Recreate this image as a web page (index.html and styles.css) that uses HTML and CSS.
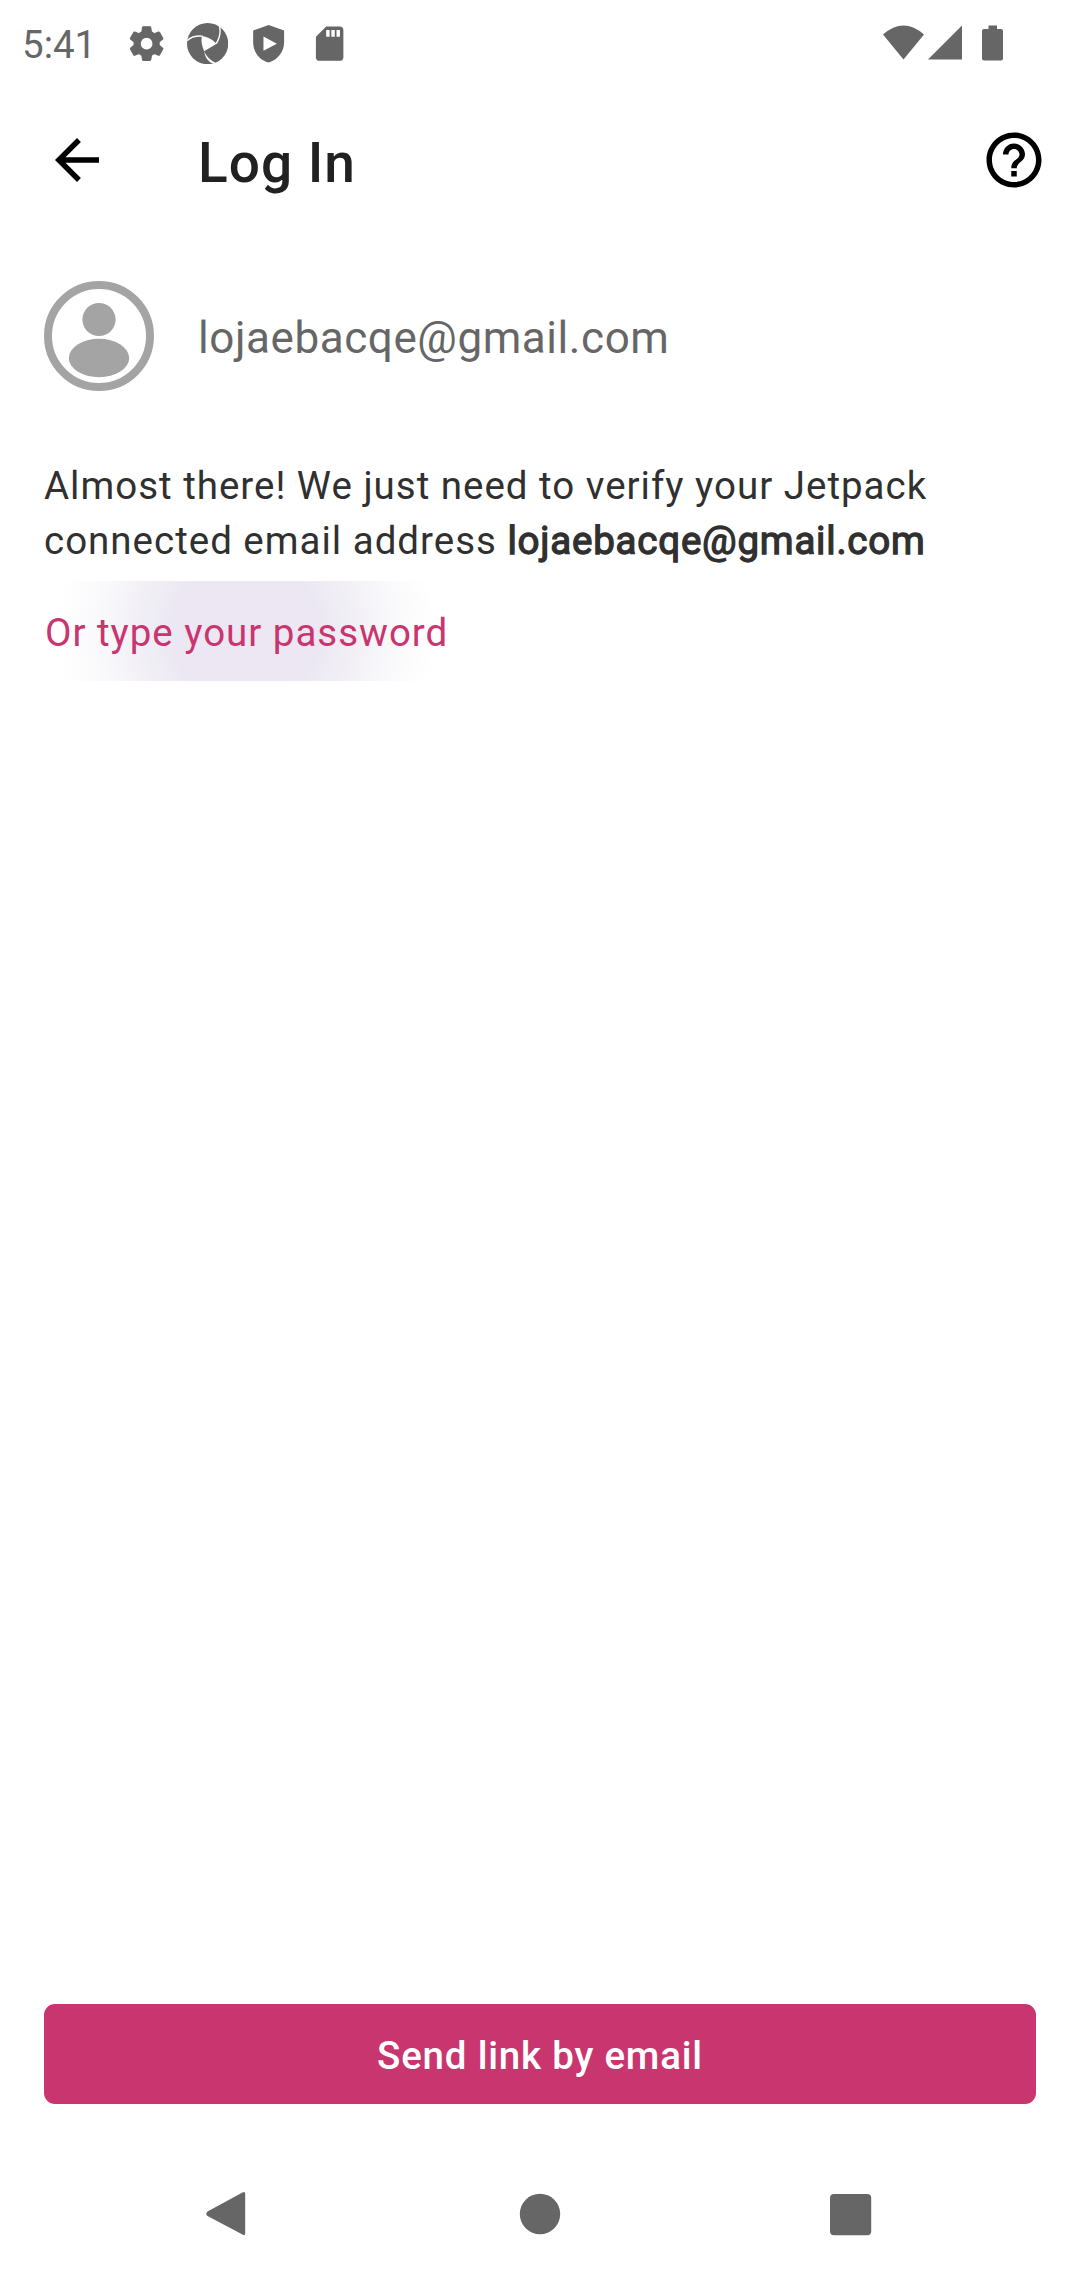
FILE: index.html
```html
<!DOCTYPE html>
<html lang="en">
<head>
<meta charset="utf-8">
<title>Log In</title>
<link rel="stylesheet" href="styles.css">
</head>
<body>
<div class="screen">
  <header class="status">
    <span class="clock">5:41</span>
    <div class="notifications">
      <svg class="gear" viewBox="-.3 -.3 24.600 24.600"><path d="M19.430 12.980c.040-.320.070-.640.070-.980s-.030-.660-.070-.980l2.110-1.650c.190-.150.240-.420.120-.640l-2-3.460c-.120-.220-.390-.300-.610-.220l-2.490 1c-.520-.400-1.080-.730-1.690-.980l-.380-2.650C14.460 2.180 14.250 2 14 2h-4c-.250 0-.460.180-.490.420l-.380 2.650c-.610.250-1.170.590-1.690.980l-2.490-1c-.230-.090-.490 0-.610.220l-2 3.460c-.130.220-.070.490.120.640l2.110 1.650c-.040.320-.070.650-.070.980s.030.660.070.980l-2.110 1.650c-.190.150-.240.420-.120.640l2 3.460c.120.220.390.300.610.220l2.490-1c.520.400 1.080.730 1.690.980l.380 2.650c.030.240.240.420.490.420h4c.250 0 .460-.180.490-.420l.380-2.650c.610-.250 1.170-.590 1.690-.980l2.490 1c.230.090.490 0 .610-.220l2-3.460c.120-.220.070-.490-.120-.640l-2.110-1.650zM12 15.800c-2.100 0-3.800-1.700-3.800-3.800s1.700-3.800 3.800-3.800 3.800 1.700 3.800 3.800-1.700 3.800-3.800 3.800z"/></svg>
      <svg viewBox="0 0 41 41"><circle cx="20.5" cy="20.5" r="20.5"/><path class="hole" d="M14.700 13Q22 13.500 29.500 20.500L17 28Q13.500 20 14.700 13ZM17 28Q20.500 36 28.500 39.500L26 40.500Q18.500 37.500 17 28Z"/><path class="slit" d="M0 17.500Q6 12 15.500 13M32.200 3Q34.500 12 29 20.500"/></svg>
      <svg viewBox="0 0 24 24"><path fill-rule="evenodd" d="M12 1.100 3 4.400V11.400C3 16.900 6.800 21.600 12 23 17.200 21.600 21 16.900 21 11.400V4.400ZM9 7.900 16.800 12 9 16.100Z"/></svg>
      <svg viewBox="0 0 24 24"><path d="M18 2h-8L4.020 8 4 20c0 1.100.9 2 2 2h12c1.100 0 2-.9 2-2V4c0-1.100-.9-2-2-2zm-6 6h-2V4h2v4zm3 0h-2V4h2v4zm3 0h-2V4h2v4z"/></svg>
    </div>
    <svg class="signals" viewBox="883 22 121 42"><path d="M883 34.500Q903.500 16.500 924 34.500L903.500 59.500ZM928 59.500 962 25.500V59.500ZM988.500 25.500h8.500v3.500h4a2 2 0 0 1 2 2v27.500a2 2 0 0 1-2 2h-17a2 2 0 0 1-2-2V31a2 2 0 0 1 2-2h4.500Z"/></svg>
  </header>

  <nav class="toolbar">
    <svg viewBox="0 0 24 24"><path d="M20 11H7.830l5.590-5.590L12 4l-8 8 8 8 1.410-1.410L7.830 13H20v-2z"/></svg>
    <h1>Log In</h1>
    <svg viewBox="0 0 24 24"><path d="M11 18h2v-2h-2v2zm1-16C6.480 2 2 6.480 2 12s4.480 10 10 10 10-4.480 10-10S17.520 2 12 2zm0 18c-4.410 0-8-3.590-8-8s3.590-8 8-8 8 3.590 8 8-3.590 8-8 8zm0-14c-2.210 0-4 1.790-4 4h2c0-1.100.9-2 2-2s2 .9 2 2c0 2-3 1.750-3 5h2c0-2.250 3-2.500 3-5 0-2.210-1.790-4-4-4z"/></svg>
  </nav>

  <main>
    <section class="account">
      <svg viewBox="0 0 110 110"><circle class="ring" cx="55" cy="55" r="51"/><circle cx="55" cy="38.500" r="16.600"/><ellipse cx="55" cy="77" rx="30.200" ry="19.200"/></svg>
      <span>lojaebacqe@gmail.com</span>
    </section>
    <p class="message">Almost there! We just need to verify your Jetpack<br>connected email address <b>lojaebacqe@gmail.com</b></p>
    <a class="password">Or type your password</a>
    <button class="send">Send link by email</button>
  </main>

  <footer class="system-nav">
    <svg viewBox="0 0 48 48"><path d="M42.500 2.500Q45.200.8 45.200 4V43Q45.200 46.300 42.500 44.500L7.500 26Q5 24 7.500 21.500Z"/></svg>
    <svg viewBox="0 0 48 48"><circle cx="24" cy="24" r="20.200"/></svg>
    <svg viewBox="0 0 48 48"><rect x="3" y="4" width="41.200" height="41.200" rx="4"/></svg>
  </footer>
</div>
</body>
</html>
```
FILE: styles.css
```css
* { box-sizing: border-box; }
body { margin: 0; background: #fff; font-family: Roboto, "Liberation Sans", sans-serif; }
svg { display: block; flex: none; }
.screen { width: 1080px; height: 2280px; display: flex; flex-direction: column; overflow: hidden; }

.status { height: 88px; display: flex; align-items: flex-start; padding: 22px 76px 0 22px; color: #666; fill: #666; }
.clock { width: 104px; font-size: 38.5px; line-height: 45px; }
.notifications { display: flex; gap: 19.7px; flex: 1; }
.notifications svg { width: 41.25px; height: 41.25px; margin-top: .7px; }
.gear { stroke: #666; stroke-width: .6; }
.hole { fill: #fff; }
.slit { fill: none; stroke: #fff; stroke-width: 1.4; }
.signals { width: 121px; height: 42px; }

.toolbar { height: 144px; display: flex; align-items: center; padding: 0 33px 0 44px; }
.toolbar svg { width: 66px; height: 66px; }
h1 { flex: 1; margin: 6px 0 0 88px; font-size: 55px; line-height: 64px; font-weight: 500; letter-spacing: 1px; color: #212121; }

main { flex: 1; display: flex; flex-direction: column; align-items: flex-start; padding: 49px 44px 74px; }
.account { display: flex; align-items: center; gap: 44px; font-size: 44px; letter-spacing: .57px; color: #666; }
.account span { padding-top: 3px; }
.account svg { width: 110px; height: 110px; fill: #a4a4a4; }
.account .ring { fill: none; stroke: #a4a4a4; stroke-width: 8; }
.message { margin: 67px 0 0; font-size: 38.5px; line-height: 55px; letter-spacing: .99px; white-space: nowrap; color: #303030; }
.message b { font-weight: 400; letter-spacing: .78px; -webkit-text-stroke: 1.3px #303030; }
.password { width: 404px; height: 100px; margin-top: 13px; padding-left: 1px; line-height: 104px; font-size: 38.5px; letter-spacing: .97px; white-space: nowrap; color: #c9356e; background: radial-gradient(circle 190px at 202px 50px, #ede7f3 0, #ede7f3 34%, #ebe8f3 39%, #f2f0f6 58%, #fafafc 80%, #fff 100%); }
.send { width: 100%; height: 100px; margin-top: auto; border: 0; border-radius: 11px; background: #c9356e; color: #fff; font: 500 38.5px/100px Roboto, sans-serif; letter-spacing: .78px; padding: 2px 0 0; }

.system-nav { height: 102px; display: grid; grid-template-columns: 316px 311px 48px; padding: 12px 0 0 200px; fill: #666; }
.system-nav svg { width: 48px; height: 48px; }
```
